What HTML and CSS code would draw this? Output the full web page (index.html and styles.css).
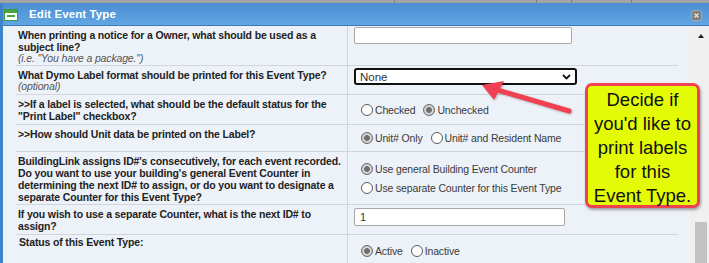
FILE: index.html
```html
<!DOCTYPE html>
<html lang="en">
<head>
  <meta charset="utf-8" />
  <title>Edit Event Type</title>
  <link rel="stylesheet" href="styles.css">
</head>
<body>
<div class="page">
  <div class="tabs">
    <span class="tab t1"></span><span class="tab t2"></span><span class="tab t3"></span><span class="tab t4"></span>
  </div>

  <div class="dialog">
    <div class="titlebar">
      <svg class="win-icon" width="14" height="12" viewBox="0 0 14 12">
        <rect x="0.5" y="0.5" width="13" height="11" fill="#fff" stroke="#3f9a3a"/>
        <rect x="1" y="1" width="12" height="3" fill="#49a542"/>
        <rect x="3" y="6" width="8" height="2" fill="#49a542"/>
      </svg>
      <span class="title">Edit Event Type</span>
      <svg class="close" width="11" height="11" viewBox="0 0 11 11">
        <rect x="0.5" y="0.5" width="10" height="10" rx="2.5" fill="#7d7d7d" stroke="#a9a9a9"/>
        <path d="M3.5 3.5 L7.5 7.5 M7.5 3.5 L3.5 7.5" stroke="#e4e4e4" stroke-width="1.3"/>
      </svg>
    </div>

    <div class="body">
      <div class="content">
        <div class="form">

          <div class="row">
            <div class="q">When printing a notice for a Owner, what should be used as a subject line?
              <span class="note">(i.e. "You have a package.")</span></div>
            <div class="a top"><input class="text wide" type="text"></div>
          </div>

          <div class="row h29">
            <div class="q">What Dymo Label format should be printed for this Event Type?
              <span class="note">(optional)</span></div>
            <div class="a top">
              <span class="select">
                <select><option>None</option></select>
                <svg class="chev" width="9" height="6" viewBox="0 0 9 6"><path d="M1 1 L4.5 4.5 L8 1" fill="none" stroke="#111" stroke-width="1.8"/></svg>
              </span>
            </div>
          </div>

          <div class="row">
            <div class="q">&gt;&gt;If a label is selected, what should be the default status for the "Print Label" checkbox?</div>
            <div class="a">
              <label><input type="radio" name="pl">Checked</label>
              <label><input type="radio" name="pl" checked>Unchecked</label>
            </div>
          </div>

          <div class="row h27">
            <div class="q">&gt;&gt;How should Unit data be printed on the Label?</div>
            <div class="a">
              <label><input type="radio" name="ud" checked>Unit# Only</label>
              <label><input type="radio" name="ud">Unit# and Resident Name</label>
            </div>
          </div>

          <div class="row">
            <div class="q">BuildingLink assigns ID#'s consecutively, for each event recorded. Do you want to use your building's general Event Counter in determining the next ID# to assign, or do you want to designate a separate Counter for this Event Type?</div>
            <div class="a stack">
              <label><input type="radio" name="ct" checked>Use general Building Event Counter</label>
              <label><input type="radio" name="ct">Use separate Counter for this Event Type</label>
            </div>
          </div>

          <div class="row">
            <div class="q">If you wish to use a separate Counter, what is the next ID# to assign?</div>
            <div class="a top"><input class="text mid" type="text" value="1"></div>
          </div>

          <div class="row last">
            <div class="q status">Status of this Event Type:</div>
            <div class="a low">
              <label><input type="radio" name="st" checked>Active</label>
              <label><input type="radio" name="st">Inactive</label>
            </div>
          </div>

        </div>
      </div>
      <div class="scrollbar">
        <span class="up"></span>
        <span class="thumb"></span>
      </div>
    </div>
  </div>

  <!-- annotation -->
  <svg class="arrow" width="709" height="263" viewBox="0 0 709 263">
    <line x1="569" y1="111" x2="494" y2="89" stroke="#ef4152" stroke-width="5" stroke-linecap="round"/>
    <polygon points="482,85 504,81 494,100" fill="#ef4152"/>
  </svg>
  <div class="callout">Decide if you'd like to print labels for this Event Type.</div>
</div>
</body>
</html>
```

FILE: styles.css
```css
:root {
  --blue:     #4f95d7;
  --panel:    #edf2f9;
  --line:     #d2d6dc;
  --text:     #222;
  --red:      #ef4152;
  --yellow:   #e4fb06;
}
*, *::before, *::after { box-sizing: border-box; margin:0; padding:0; }
body {
  font-family: "Liberation Sans", Arial, sans-serif;
  font-size: 10.5px;
  letter-spacing: -.15px;
  color: var(--text);
  background: var(--panel);
  width: 709px; height: 263px; overflow: hidden;
}
.page { position: relative; width: 709px; height: 263px; }

.tabs { height: 3px; background: #a3a3a3; display: flex; }
.tab { border-right: 1px solid #7c7c7c; }
.t1 { width: 395px; } .t2 { width: 142px; } .t3 { width: 35px; } .t4 { width: 60px; }

.dialog { height: 260px; display: flex; flex-direction: column; border-left: 3px solid #3f83c9; }

.titlebar {
  height: 23px; flex: none;
  display: flex; align-items: center;
  background: linear-gradient(#4a8ed3, #61a7e2);
  border-bottom: 1px solid #3a78b8;
  padding: 0 7px 0 1px;
}
.win-icon { margin-right: 11px; margin-top: 1px; }
.title { color: #fff; font-weight: 700; font-size: 11.5px; letter-spacing: .1px; }
.close { margin-left: auto; margin-top: 2px; }

.body { flex: 1; display: flex; min-height: 0; }
.content { flex: 1; padding: 0 12px 0 13px; background: var(--panel); }
.form { width: 662px; }

.row {
  display: grid; grid-template-columns: 332px 1fr;
  min-height: 30px;
  border-bottom: 1px solid var(--line);
}
.row.h29 { min-height: 29px; }
.row.h27 { min-height: 27px; }
.row.last { border-bottom: none; height: 30px; }
.q {
  font-weight: 700; line-height: 12px;
  padding: 3px 2px 1px;
  border-right: 1px solid var(--line);
}
.note { display: block; font-weight: 400; font-style: italic; color: #555; line-height: 11px; }
.q.status { padding: 1px 3px; }

.a { display: flex; align-items: center; gap: 0; padding: 0 6px; color: #3a3a3a; }
.a.top { align-items: flex-start; padding-top: 2px; }
.a.stack { flex-direction: column; align-items: flex-start; justify-content: center; gap: 7px; }
.a.low { padding-top: 2px; }

.a label { display: flex; align-items: center; gap: 2px; margin-right: 1px; }
input[type=radio] {
  appearance: none; width: 12px; height: 12px; border-radius: 50%;
  border: 1px solid #5a5a5a; background: #fff; margin: 0 0 0 7px;
}
input[type=radio]:checked {
  border-color: #6b6b6b;
  background: radial-gradient(circle, #6f6f6f 0 2.6px, #d8d8d8 3.2px 4.4px, #b0b0b0 5px);
}

.text {
  height: 18px; border: 1px solid #a8a8a8; border-radius: 2px;
  background: #fff; font: 11px "Liberation Sans", Arial, sans-serif;
  padding: 0 5px; color: #333;
}
.text.wide { width: 218px; height: 17px; margin-top: -1px; }
.text.mid { width: 211px; margin-top: 1px; }

.select { position: relative; display: inline-block; }
.select select {
  appearance: none; width: 223px; height: 17px;
  border: 2px solid #111; border-radius: 3px; background: #fff;
  font: 11.5px "Liberation Sans", Arial, sans-serif; color: #333;
  padding: 0 4px; margin-top: 0;
}
.chev { position: absolute; right: 6px; top: 6px; }

.scrollbar { width: 19px; background: #f0f0f0; position: relative; }
.up {
  position: absolute; left: 8px; top: 8px;
  border-left: 3px solid transparent; border-right: 3px solid transparent;
  border-bottom: 4px solid #222;
}
.thumb { position: absolute; left: 5px; top: 196px; width: 12px; height: 50px; background: #c2c2c2; }

/* annotation overlay */
.arrow { position: absolute; left: 0; top: 0; filter: drop-shadow(1px 1px 1px rgba(0,0,0,.25)); }
.callout {
  position: absolute; left: 585px; top: 83px; width: 115px; height: 125px;
  background: var(--yellow); border: 3px solid var(--red); border-radius: 7px;
  box-shadow: 1px 2px 3px rgba(0,0,0,.35);
  font-size: 18.5px; line-height: 24px; text-align: center; color: #111;
  padding: 2px 4px 0; letter-spacing: 0;
}
```
